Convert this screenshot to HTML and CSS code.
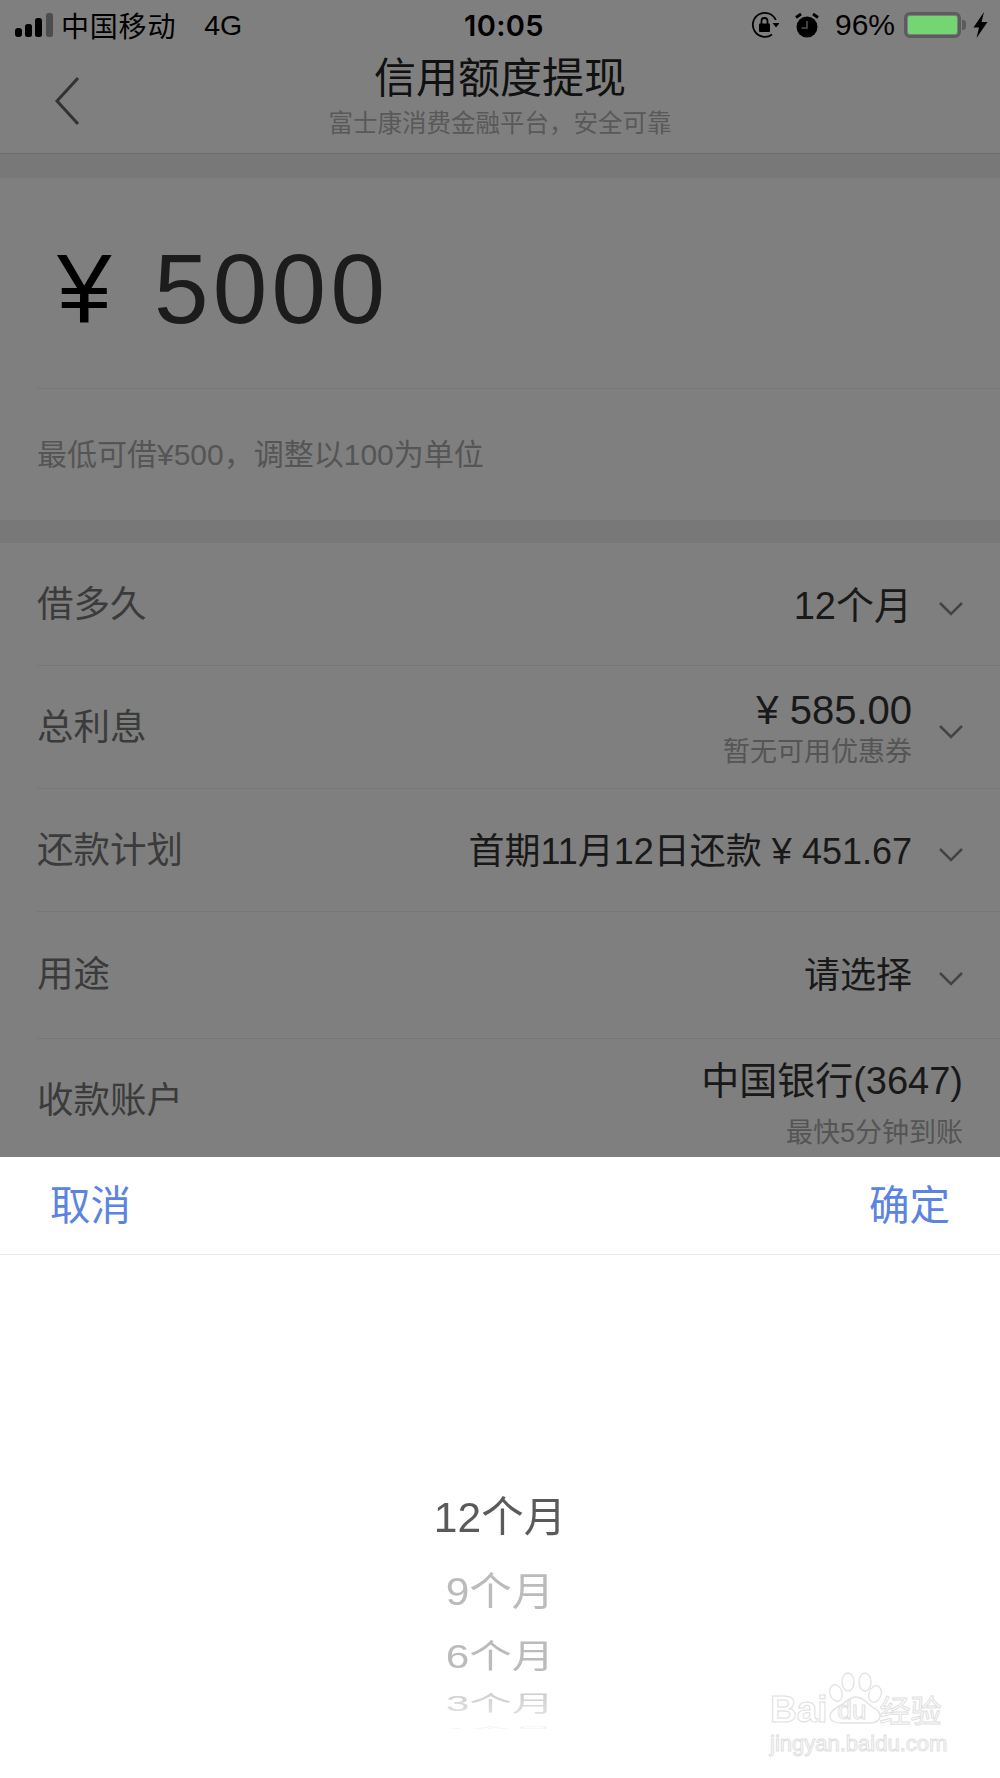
FILE: index.html
```html
<!DOCTYPE html>
<html lang="zh-CN">
<head>
<meta charset="utf-8">
<title>信用额度提现</title>
<link rel="stylesheet" href="styles.css">
</head>
<body>
<div class="page">
  <header class="top">
    <div class="status">
      <div class="status-left">
        <svg class="signal" viewBox="0 0 38 24" width="38" height="24"><rect x="0" y="15" width="7" height="9" rx="3" fill="#000"/><rect x="10" y="11" width="7" height="13" rx="2.5" fill="#000"/><rect x="20" y="5" width="7" height="19" rx="2.5" fill="#000"/><rect x="31" y="0" width="7" height="24" rx="2.5" fill="#9a9a9a"/></svg>
        <span class="carrier">中国移动</span>
        <span class="net">4G</span>
      </div>
      <div class="time">10:05</div>
      <div class="status-right">
        <svg class="lock" viewBox="0 0 28 28" width="28" height="28"><path d="M21 23.500A12 12 0 1 1 24.800 9" fill="none" stroke="#000" stroke-width="1.800"/><path d="M21.500 12h7L25 16.500z" fill="#000"/><rect x="8" y="12.500" width="11" height="8.500" rx="1" fill="#000"/><path d="M10.500 13V10a3 3 0 0 1 6 0v3" fill="none" stroke="#000" stroke-width="1.800"/></svg>
        <svg class="alarm" viewBox="0 0 24 26" width="24" height="26"><circle cx="12" cy="15" r="10.500" fill="#000"/><path d="M12 9v7H6.500" fill="none" stroke="#808080" stroke-width="2"/><path d="M1 5.500l5-3.500M23 5.500 18 2" stroke="#000" stroke-width="2.800" fill="none"/></svg>
        <span class="pct">96%</span>
        <span class="battery"><span class="battery-fill"></span></span>
        <span class="nub"></span>
        <svg class="bolt" viewBox="0 0 15 26" width="15" height="26"><path d="M11 0 0.500 15.500h5.500L3.500 26 14.500 10H8.500z" fill="#000"/></svg>
      </div>
    </div>
    <div class="nav">
      <svg class="back" viewBox="0 0 24 48" width="24" height="48"><path d="M23 1 2 24l21 23" fill="none" stroke="#666" stroke-width="3"/></svg>
      <div class="nav-text">
        <div class="nav-title">信用额度提现</div>
        <div class="nav-sub">富士康消费金融平台&#65292;安全可靠</div>
      </div>
    </div>
  </header>

  <section class="amount">
    <div class="amount-value"><span class="yen">¥</span><span class="sum">5000</span></div>
    <div class="hint">最低可借¥500&#65292;调整以100为单位</div>
  </section>

  <section class="rows">
    <div class="row">
      <span class="label">借多久</span>
      <div class="value"><div class="main">12个月</div></div>
      <svg class="chev" viewBox="0 0 24 14" width="24" height="14"><path d="M1 1l11 11L23 1" fill="none" stroke="#888" stroke-width="2.500"/></svg>
    </div>
    <div class="row">
      <span class="label">总利息</span>
      <div class="value"><div class="main main-big">¥ 585.00</div><div class="sub">暂无可用优惠券</div></div>
      <svg class="chev" viewBox="0 0 24 14" width="24" height="14"><path d="M1 1l11 11L23 1" fill="none" stroke="#888" stroke-width="2.500"/></svg>
    </div>
    <div class="row">
      <span class="label">还款计划</span>
      <div class="value"><div class="main main-fit">首期11月12日还款 ¥ 451.67</div></div>
      <svg class="chev" viewBox="0 0 24 14" width="24" height="14"><path d="M1 1l11 11L23 1" fill="none" stroke="#888" stroke-width="2.500"/></svg>
    </div>
    <div class="row row-tall">
      <span class="label">用途</span>
      <div class="value"><div class="main main-fit">请选择</div></div>
      <svg class="chev" viewBox="0 0 24 14" width="24" height="14"><path d="M1 1l11 11L23 1" fill="none" stroke="#888" stroke-width="2.500"/></svg>
    </div>
    <div class="row row-last">
      <span class="label">收款账户</span>
      <div class="value value-drop"><div class="main">中国银行(3647)</div><div class="sub sub-wide">最快5分钟到账</div></div>
    </div>
  </section>

  <div class="overlay"></div>

  <div class="sheet">
    <div class="sheet-head">
      <span class="action">取消</span>
      <span class="action">确定</span>
    </div>
    <div class="wheel">
      <div class="item item-0">12个月</div>
      <div class="item item-1">9个月</div>
      <div class="item item-2">6个月</div>
      <div class="item item-3">3个月</div>
      <div class="item item-4">1个月</div>
    </div>
  </div>

  <div class="mark">
    <svg class="paw" viewBox="0 0 54 52" width="54" height="52"><g fill="#fff" stroke="#e2e2e2" stroke-width="1.300"><ellipse cx="8" cy="21" rx="6" ry="8.500" transform="rotate(-18 8 21)"/><ellipse cx="20" cy="10" rx="6" ry="9"/><ellipse cx="37" cy="10" rx="6" ry="9"/><ellipse cx="47" cy="22" rx="6" ry="8.500" transform="rotate(18 47 22)"/><path d="M28 25c6 0 10 5 15 9 5 3 10 6 9 11-1 5-6 6-11 6H14C8 51 2 50 2 44c0-5 6-8 11-11 5-3 9-8 15-8z"/></g></svg>
    <div class="mark-line"><span>Bai</span><span class="mark-du">du</span><span class="mark-cn">经验</span></div>
    <div class="mark-url">jingyan.baidu.com</div>
  </div>
</div>
</body>
</html>
```

FILE: styles.css
```css
* { box-sizing: border-box; }
html, body { margin: 0; padding: 0; }
body {
  font-family: "Liberation Sans", "Noto Sans CJK SC", sans-serif;
  background: #fff;
}
.page {
  position: relative;
  width: 1000px;
  height: 1778px;
  overflow: hidden;
  background: #f1f1f1;
}
.top {
  height: 154px;
  background: #fff;
  border-bottom: 1px solid #d8d8d8;
}
.status {
  position: relative;
  display: flex;
  justify-content: space-between;
  align-items: center;
  height: 50px;
  padding: 0 12px 0 15px;
  color: #000;
}
.status-left { display: flex; align-items: center; }
.signal { margin-right: 8px; }
.carrier { font-size: 28px; letter-spacing: .8px; }
.net { font-size: 28.500px; margin-left: 28px; }
.time {
  position: absolute;
  left: 0;
  right: 0;
  text-align: center;
  font-family: Inter, "Liberation Sans", sans-serif;
  font-size: 29px;
  font-weight: 600;
  letter-spacing: .4px;
  padding-left: 8px;
}
.status-right { display: flex; align-items: center; }
.lock { margin-right: 16px; }
.alarm { margin-right: 16px; }
.pct { font-size: 30px; margin-right: 9px; }
.battery {
  display: block;
  width: 57px;
  height: 26px;
  border: 3px solid #b8b8b8;
  border-radius: 6px;
  padding: 1px;
}
.battery-fill {
  position: relative;
  z-index: 2;
  display: block;
  height: 100%;
  background: #74d673;
  border-radius: 2px;
}
.nub {
  display: block;
  width: 4px;
  height: 10px;
  margin: 0 7px 0 1px;
  background: #b8b8b8;
  border-radius: 0 3px 3px 0;
}
.nav { position: relative; height: 103px; padding-top: 1px; text-align: center; }
.back { position: absolute; left: 55px; top: 27px; }
.nav-title { font-size: 42px; line-height: 56px; color: #222; }
.nav-sub { font-size: 24.500px; line-height: 34px; color: #b2b2b2; }

.amount {
  margin-top: 24px;
  height: 342px;
  padding-left: 37px;
  background: #fff;
}
.amount-value {
  display: flex;
  align-items: center;
  height: 211px;
  padding: 12px 0 0 20px;
  border-bottom: 1px solid #eee;
  font-size: 98px;
  letter-spacing: 4.300px;
}
.yen { width: 97px; color: #000; }
.sum { color: #383838; }
.hint { font-size: 30px; line-height: 131px; color: #aaa; }

.rows {
  margin-top: 22.500px;
  padding-left: 37px;
  background: #fff;
}
.row {
  display: flex;
  align-items: center;
  height: 123.300px;
  padding-right: 37px;
  border-bottom: 1px solid #eee;
}
.row-tall { height: 126.300px; padding-bottom: 3px; }
.row-last { border-bottom: 0; }
.label { font-size: 36.500px; color: #777; margin-bottom: 5px; }
.value { margin-left: auto; margin-top: 4px; text-align: right; }
.value-drop { margin-top: 10px; }
.main { font-size: 38px; line-height: 46px; color: #333; }
.main-big { font-size: 40px; }
.main-fit { font-size: 36px; }
.sub { font-size: 27px; line-height: 38px; color: #aaa; }
.sub-wide { margin-top: 10px; }
.chev { margin: 10px 0 0 27px; }

.overlay {
  position: absolute;
  inset: 0;
  background: rgba(0, 0, 0, .5);
}
.sheet {
  position: absolute;
  left: 0;
  right: 0;
  top: 1157px;
  bottom: 0;
  background: #fff;
}
.sheet-head {
  display: flex;
  justify-content: space-between;
  align-items: center;
  height: 98px;
  padding: 0 0 6px;
  padding-inline: 50px;
  border-bottom: 1px solid #e8e8e8;
}
.action { font-size: 40.500px; color: #5b83e2; }
.wheel {
  display: flex;
  flex-direction: column;
  align-items: center;
  height: 474px;
  padding-top: 235px;
  overflow: hidden;
  font-size: 42.500px;
  -webkit-mask-image: linear-gradient(#000 92%, rgba(0, 0, 0, .35));
  mask-image: linear-gradient(#000 92%, rgba(0, 0, 0, .35));
}
.item { white-space: nowrap; line-height: 56px; height: 56px; }
.item-0 { color: #5a5a5a; }
.item-1 { color: #bbb; margin-top: 18px; transform: scaleY(.92); }
.item-2 { color: #bbb; margin-top: 9px; transform: scaleY(.78); }
.item-3 { color: #ccc; margin-top: -9px; transform: scaleY(.5); }
.item-4 { color: #ddd; margin-top: -30px; transform: scaleY(.18); }

.mark {
  position: absolute;
  left: 770px;
  top: 1672px;
  width: 180px;
  height: 84px;
  color: #fff;
  -webkit-text-stroke: 1px #e0e0e0;
}
.paw { position: absolute; left: 58px; top: 0; }
.mark-line {
  position: absolute;
  left: 0;
  top: 13px;
  display: flex;
  align-items: baseline;
  font-size: 37px;
  font-weight: 700;
  line-height: 50px;
}
.mark-du { position: relative; top: -3px; font-size: 26px; font-weight: 400; margin-left: 10px; }
.mark-cn { font-size: 31px; font-weight: 400; margin-left: 13px; }
.mark-url {
  position: absolute;
  left: 0;
  top: 59px;
  font-size: 22px;
  line-height: 26px;
}
```
